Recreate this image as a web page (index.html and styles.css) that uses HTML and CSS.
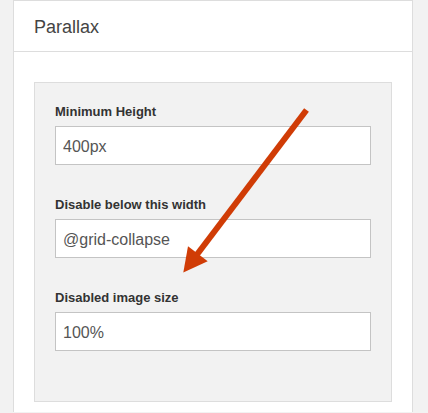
FILE: index.html
```html
<!DOCTYPE html>
<html>
<head>
<meta charset="utf-8">
<link rel="stylesheet" href="styles.css">
</head>
<body>
<div class="panel">
  <div class="panel-header">Parallax</div>
  <div class="panel-body">
    <div class="settings">
      <div class="field">
        <label class="field-label">Minimum Height</label>
        <input class="field-input" type="text" value="400px">
      </div>
      <div class="field">
        <label class="field-label">Disable below this width</label>
        <input class="field-input" type="text" value="@grid-collapse">
      </div>
      <div class="field">
        <label class="field-label">Disabled image size</label>
        <input class="field-input" type="text" value="100%">
      </div>
    </div>
  </div>
</div>
<svg class="annotation" width="428" height="413" viewBox="0 0 428 413" xmlns="http://www.w3.org/2000/svg">
  <line x1="306.5" y1="110" x2="197" y2="254.5" stroke="#d03c06" stroke-width="6"/>
  <polygon points="183.3,272.5 188,246.3 207.7,261.2" fill="#d03c06"/>
</svg>
</body>
</html>
```
FILE: styles.css
```css
html, body {
  margin: 0;
  padding: 0;
}
body {
  background: #f2f2f2;
  font-family: "Liberation Sans", Arial, Helvetica, sans-serif;
  width: 428px;
  height: 413px;
  overflow: hidden;
  position: relative;
}
.panel {
  margin-left: 13px;
  width: 400px;
  box-sizing: border-box;
  background: #fff;
  border: 1px solid #dddddd;
  border-bottom: 0;
}
.panel-header {
  height: 51px;
  box-sizing: border-box;
  border-bottom: 1px solid #dddddd;
  padding: 13px 20px 0;
  font-size: 18px;
  line-height: 26px;
  color: #444;
}
.panel-body {
  padding: 30px 20px 10px;
}
.settings {
  background: #f2f2f2;
  border: 1px solid #dddddd;
  padding: 20px 20px 50px;
}
.field {
  display: flex;
  flex-direction: column;
}
.field + .field {
  margin-top: 31px;
}
.field-label {
  font-size: 13px;
  font-weight: bold;
  line-height: 18px;
  color: #333;
  margin-bottom: 5px;
}
.field-input {
  margin: 0;
  width: 316px;
  height: 39px;
  box-sizing: border-box;
  border: 1px solid #c4c4c4;
  border-radius: 0;
  background: #fff;
  padding: 2px 7px 0;
  font-family: "Liberation Sans", Arial, Helvetica, sans-serif;
  font-size: 16px;
  color: #555;
  outline: none;
}
.annotation {
  position: absolute;
  left: 0;
  top: 0;
  pointer-events: none;
}
```
